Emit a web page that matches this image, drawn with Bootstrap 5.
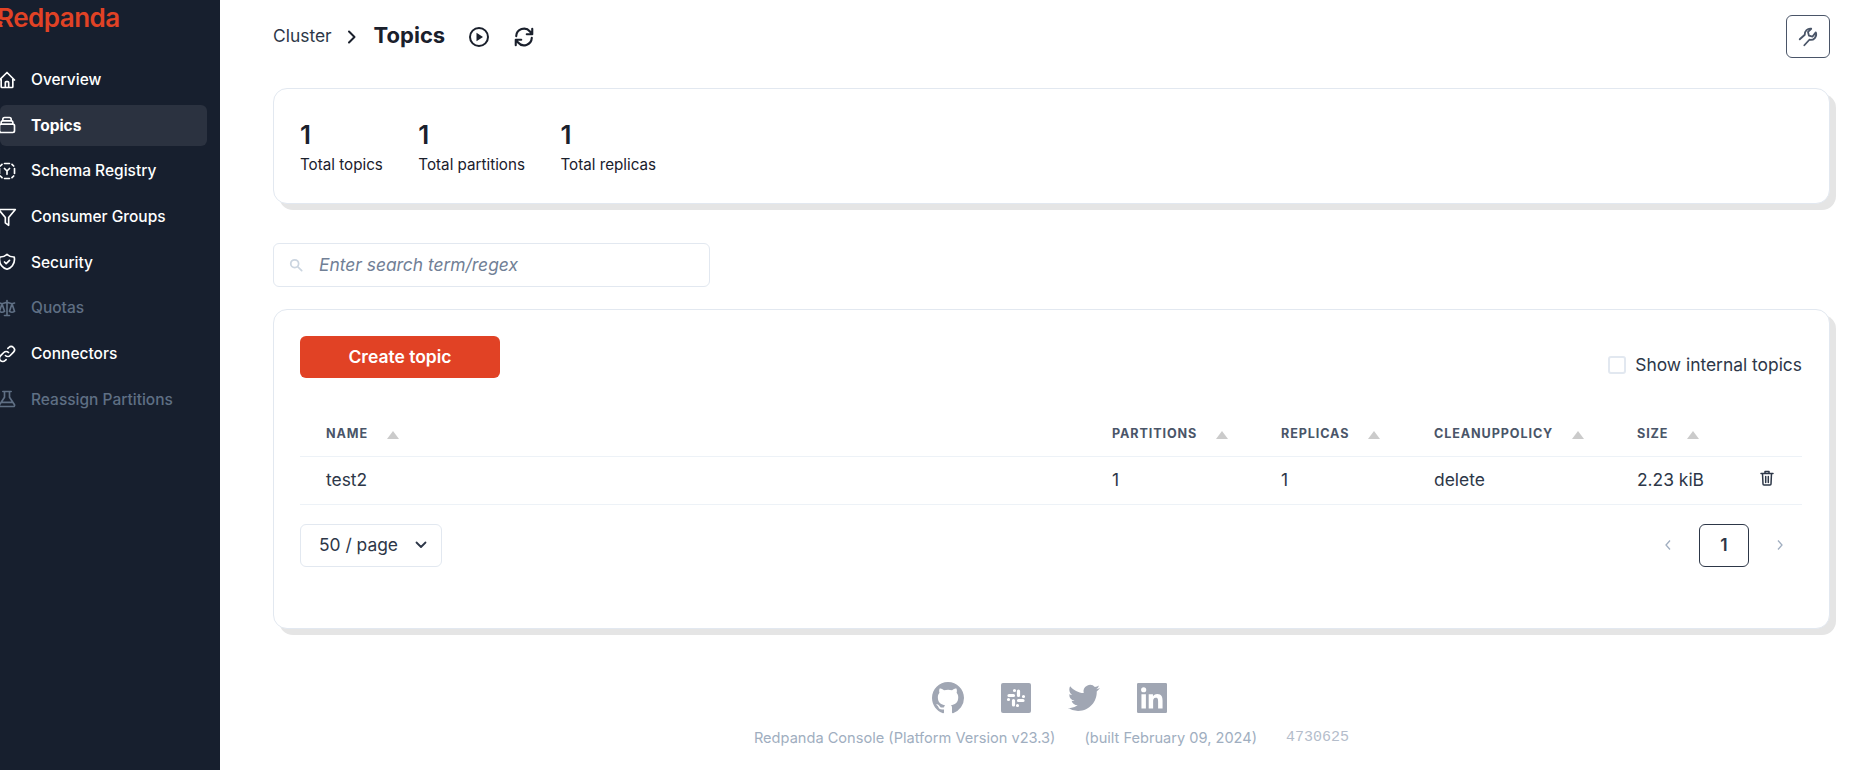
<!DOCTYPE html>
<html lang="en">
<head>
<meta charset="utf-8">
<title>Topics</title>
<link href="https://cdn.jsdelivr.net/npm/bootstrap@5.3.0/dist/css/bootstrap.min.css" rel="stylesheet">
<style>
html,body{height:100%}
body{font-family:Inter,"Noto Sans",sans-serif;color:#1a202c;background:#fff;overflow:hidden}
.rp-shell{height:770px}
.rp-side{width:220px;flex:none;background:#171f2e;overflow:hidden}
.rp-logo{position:relative;height:59px;margin-left:-3px;padding-top:1px;font-size:26px;line-height:34px;font-weight:600;color:#e14225;letter-spacing:-.5px}
.rp-logo svg{position:absolute;left:3px;top:19px}
.rp-item{display:flex;align-items:center;height:41px;margin:0 13px 4.7px 0;border-radius:6px;color:#fff;font-size:15.5px;font-weight:500;text-decoration:none}
.rp-item svg{width:20px;height:20px;margin:0 14px 0 -3px;flex:none;fill:none;stroke:currentColor;stroke-width:2;stroke-linecap:round;stroke-linejoin:round}
.rp-item.rp-on{background:#2b3240;font-weight:700}
.rp-item.rp-off{color:#5f6f84}
.rp-main{padding:15px 36px 0 53px;min-width:0}
.rp-head{height:43px}
.rp-crumb{font-size:17.400px;color:#2d3748;margin-bottom:1px}
.rp-chev{margin:0 17px 0 15px}
.rp-title{font-size:22px;font-weight:700;color:#1a202c;margin-bottom:2px}
.rp-play{margin-left:23px}
.rp-sync{margin-left:23px}
.rp-toolbtn{width:44px;height:43px;border:1px solid #4a5568;border-radius:6px;background:#fff;color:#4a5568}
.rp-panel{background:#fff;border:1px solid #e2e8f0;border-radius:14px;box-shadow:6px 6px 0 0 #e5e5e5;padding:26px 27px 26px 26px}
.rp-stats{margin-top:30px;height:116px;gap:35.500px;padding-top:27px}
.rp-num{font-size:26px;font-weight:600;line-height:38px;color:#1a202c}
.rp-lab{font-size:15.200px;line-height:22px;color:#1a202c}
.rp-search{margin-top:39px;width:437px;height:44px;border:1px solid #e2e8f0;border-radius:6px;padding-left:15px;gap:16px;color:#718096;font-size:17.400px;font-style:italic}
.rp-tablecard{margin-top:22px;height:320px}
.rp-create{width:200px;height:42px;background:#e14225;border:0;border-radius:6px;color:#fff;font-size:17.500px;font-weight:600}
.rp-check{font-size:17.400px;color:#2d3748;gap:9px;margin-top:16px}
.rp-box{width:18px;height:18px;border:2px solid #e2e8f0;border-radius:3px}
.rp-grid{table-layout:fixed;width:100%;margin-top:32px;margin-bottom:0}
.rp-grid th{height:46px;padding:3px 0 0 26px;font-size:12.600px;font-weight:700;letter-spacing:.9px;color:#4a5568;border-bottom:1px solid #edf2f7;vertical-align:middle;white-space:nowrap}
.rp-grid td{height:48px;padding:0 0 0 26px;font-size:17.400px;color:#2d3748;border-bottom:1px solid #edf2f7;vertical-align:middle}
.rp-tri{display:inline-block;width:0;height:0;margin-left:19px;border-left:6px solid transparent;border-right:6px solid transparent;border-bottom:8px solid #cbcbcb;vertical-align:-1px}
.rp-foot-row{margin-top:19px}
.rp-size{width:142px;height:43px;border:1px solid #e2e8f0;border-radius:6px;padding:0 14px 0 18px;font-size:17.400px;color:#2d3748}
.rp-page{width:50px;height:43px;border:1px solid #2d3748;border-radius:6px;font-size:17.400px;font-weight:600;color:#2d3748}
.rp-pager{margin-right:18px;gap:27px;color:#a0aec0}
.rp-foot{margin-top:53px;color:#a0aec0}
.rp-icons{gap:37px;height:32px;margin-left:-4px}
.rp-icons svg{fill:#a0a6b3;display:block}
.rp-note{margin-top:13px;font-size:14.600px;line-height:22px;color:#a0aec0;gap:29px}
.rp-hash{font-family:"Liberation Mono",monospace;font-size:15px;font-weight:300;color:#b4bdcb}
</style>
</head>
<body>
<div class="d-flex rp-shell">
  <aside class="rp-side">
    <div class="rp-logo">Redpanda<svg width="14" height="10" viewBox="0 0 14 10"><path d="M0 1l6 2M2 5l5 2" stroke="#171f2e" stroke-width="1.5" fill="none"/></svg></div>
    <nav>
      <a class="rp-item" href="#"><svg viewBox="0 0 24 24"><path d="M3 12l9-9 9 9M5 10v10a1 1 0 001 1h12a1 1 0 001-1V10M10 21v-6a1 1 0 011-1h2a1 1 0 011 1v6"/></svg>Overview</a>
      <a class="rp-item rp-on" href="#"><svg viewBox="0 0 24 24"><path d="M19 11H5m14 0a2 2 0 012 2v6a2 2 0 01-2 2H5a2 2 0 01-2-2v-6a2 2 0 012-2m14 0V9a2 2 0 00-2-2M5 11V9a2 2 0 012-2m0 0V5a2 2 0 012-2h6a2 2 0 012 2v2M7 7h10"/></svg>Topics</a>
      <a class="rp-item" href="#"><svg viewBox="0 0 24 24"><path d="M9 3h6M3 9v6M21 9v6M9 21h6M4 6l2-2M18 4l2 2M4 18l2 2M18 20l2-2M9 9l3 3 3-3M12 12v4"/></svg>Schema Registry</a>
      <a class="rp-item" href="#"><svg viewBox="0 0 24 24"><path d="M2 3h20l-8 9.500V22l-4-3v-6.500z"/></svg>Consumer Groups</a>
      <a class="rp-item" href="#"><svg viewBox="0 0 24 24"><path d="M9 12l2 2 4-4m5.618-4.016A11.955 11.955 0 0112 2.944a11.955 11.955 0 01-8.618 3.04A12.020 12.020 0 003 9c0 5.591 3.824 10.290 9 11.622 5.176-1.332 9-6.030 9-11.622 0-1.042-.133-2.052-.382-3.016z"/></svg>Security</a>
      <a class="rp-item rp-off" href="#"><svg viewBox="0 0 24 24"><path d="M3 6l3 1m0 0l-3 9a5.002 5.002 0 006.001 0M6 7l3 9M6 7l6-2m6 2l3-1m-3 1l-3 9a5.002 5.002 0 006.001 0M18 7l3 9m-3-9l-6-2m0-2v2m0 16V5m0 16H9m3 0h3"/></svg>Quotas</a>
      <a class="rp-item" href="#"><svg viewBox="0 0 24 24"><path d="M13.828 10.172a4 4 0 00-5.656 0l-4 4a4 4 0 105.656 5.656l1.102-1.101m-.758-4.899a4 4 0 005.656 0l4-4a4 4 0 00-5.656-5.656l-1.100 1.100"/></svg>Connectors</a>
      <a class="rp-item rp-off" href="#"><svg viewBox="0 0 24 24"><path d="M7 3h10M9 3v7l-6 9a1.500 1.500 0 001.300 2h15.400a1.500 1.500 0 001.300-2l-6-9V3M5 16h14"/></svg>Reassign Partitions</a>
    </nav>
  </aside>
  <main class="rp-main flex-grow-1">
    <div class="rp-head d-flex align-items-center">
      <span class="rp-crumb">Cluster</span>
      <svg class="rp-chev" width="10" height="14" viewBox="0 0 10 14" fill="none" stroke="#1a202c" stroke-width="2" stroke-linecap="round" stroke-linejoin="round"><path d="M2 1.500L7.500 7 2 12.500"/></svg>
      <span class="rp-title">Topics</span>
      <svg class="rp-play" width="22" height="22" viewBox="0 0 22 22"><circle cx="11" cy="11" r="9" fill="none" stroke="#1a202c" stroke-width="2"/><path d="M8.500 6.800l6.500 4.200-6.500 4.200z" fill="#1a202c"/></svg>
      <svg class="rp-sync" width="22" height="22" viewBox="0 0 24 24" fill="none" stroke="#1a202c" stroke-width="2.300" stroke-linecap="round" stroke-linejoin="round"><path d="M3.500 11A8.500 8.500 0 0118.500 6L21 9M21 3v6h-6M20.500 13A8.500 8.500 0 015.500 18L3 15M3 21v-6h6"/></svg>
      <button class="rp-toolbtn ms-auto d-flex align-items-center justify-content-center p-0" type="button" aria-label="Settings"><svg width="22" height="22" viewBox="0 0 24 24" fill="none" stroke="currentColor" stroke-width="2" stroke-linecap="round" stroke-linejoin="round"><path d="M3 14.500l5.500-5a6 6 0 017-6.500l-3.500 3.500 1 4 4 1L20.500 7a6 6 0 01-7 8l-5.500 6"/></svg></button>
    </div>

    <section class="rp-panel rp-stats d-flex">
      <div><div class="rp-num">1</div><div class="rp-lab">Total topics</div></div>
      <div><div class="rp-num">1</div><div class="rp-lab">Total partitions</div></div>
      <div><div class="rp-num">1</div><div class="rp-lab">Total replicas</div></div>
    </section>

    <div class="rp-search d-flex align-items-center">
      <svg width="14" height="14" viewBox="0 0 16 16" fill="none" stroke="#cbd5e0" stroke-width="2" stroke-linecap="round"><circle cx="6.500" cy="6.500" r="4.500"/><path d="M10 10l4.500 4.500"/></svg>
      <span>Enter search term/regex</span>
    </div>

    <section class="rp-panel rp-tablecard">
      <div class="d-flex justify-content-between align-items-start">
        <button class="rp-create" type="button">Create topic</button>
        <div class="rp-check d-flex align-items-center"><span class="rp-box"></span><span>Show internal topics</span></div>
      </div>
      <table class="rp-grid">
        <colgroup><col style="width:786px"><col style="width:169px"><col style="width:153px"><col style="width:203px"><col style="width:123px"><col></colgroup>
        <thead><tr>
          <th>NAME<span class="rp-tri"></span></th>
          <th>PARTITIONS<span class="rp-tri"></span></th>
          <th>REPLICAS<span class="rp-tri"></span></th>
          <th>CLEANUPPOLICY<span class="rp-tri"></span></th>
          <th>SIZE<span class="rp-tri"></span></th>
          <th></th>
        </tr></thead>
        <tbody><tr>
          <td>test2</td><td>1</td><td>1</td><td>delete</td><td>2.23 kiB</td>
          <td><svg class="d-block mb-1" width="14" height="16" viewBox="0 0 14 16" fill="none" stroke="#2d3748" stroke-width="1.500" stroke-linecap="round" stroke-linejoin="round"><path d="M1 3.500h12M5 3.500V1.500h4v2M2.500 3.500l.5 10.500a1 1 0 001 1h6a1 1 0 001-1l.5-10.500M5.700 6.500v6M8.300 6.500v6"/></svg></td>
        </tr></tbody>
      </table>
      <div class="rp-foot-row d-flex justify-content-between align-items-center">
        <div class="rp-size d-flex justify-content-between align-items-center"><span>50 / page</span><svg width="12" height="8" viewBox="0 0 12 8" fill="none" stroke="#2d3748" stroke-width="1.800" stroke-linecap="round" stroke-linejoin="round"><path d="M1.500 1.500L6 6l4.500-4.500"/></svg></div>
        <div class="d-flex align-items-center rp-pager">
          <svg width="8" height="12" viewBox="0 0 8 12" fill="none" stroke="currentColor" stroke-width="1.300"><path d="M6 1.500L2 6l4 4.500"/></svg>
          <span class="rp-page d-flex align-items-center justify-content-center">1</span>
          <svg width="8" height="12" viewBox="0 0 8 12" fill="none" stroke="currentColor" stroke-width="1.300"><path d="M2 1.500L6 6l-4 4.500"/></svg>
        </div>
      </div>
    </section>

    <footer class="rp-foot d-flex flex-column align-items-center">
      <div class="rp-icons d-flex align-items-center">
        <svg width="32" height="32" viewBox="0 0 16 16"><path d="M8 0C3.580 0 0 3.580 0 8c0 3.540 2.290 6.530 5.470 7.590.4.070.55-.170.55-.380 0-.190-.010-.820-.010-1.490-2.010.370-2.530-.490-2.690-.940-.090-.230-.480-.940-.820-1.130-.280-.150-.680-.520-.010-.530.630-.010 1.080.580 1.230.820.720 1.210 1.870.870 2.330.660.070-.520.280-.870.510-1.070-1.780-.2-3.640-.890-3.640-3.950 0-.870.310-1.590.820-2.150-.080-.2-.360-1.020.080-2.120 0 0 .670-.210 2.200.820.640-.180 1.320-.270 2-.270.680 0 1.360.090 2 .270 1.530-1.040 2.200-.820 2.200-.820.440 1.100.160 1.920.080 2.120.510.560.820 1.270.820 2.150 0 3.070-1.870 3.750-3.650 3.950.290.250.540.730.540 1.480 0 1.070-.010 1.930-.010 2.200 0 .210.150.460.550.380A8.013 8.013 0 0016 8c0-4.420-3.580-8-8-8z"/></svg>
        <svg width="30" height="30" viewBox="0 0 30 30"><rect width="30" height="30" rx="2"/><g stroke="#fff" stroke-width="3.200" stroke-linecap="round"><path d="M8 12.500h4.500M13.500 7.500v0M17.500 8v4.500M22.500 13.500h0M17.500 17.500H22M16.500 22.500h0M12.500 17.500V22M7.500 16.500h0"/></g></svg>
        <svg width="32" height="32" viewBox="0 0 24 24"><path d="M23.953 4.570a10 10 0 01-2.825.775 4.958 4.958 0 002.163-2.723c-.951.555-2.005.959-3.127 1.184a4.920 4.920 0 00-8.384 4.482C7.690 8.095 4.067 6.130 1.640 3.162a4.822 4.822 0 00-.666 2.475c0 1.710.870 3.213 2.188 4.096a4.904 4.904 0 01-2.228-.616v.060a4.923 4.923 0 003.946 4.827 4.996 4.996 0 01-2.212.085 4.936 4.936 0 004.604 3.417 9.867 9.867 0 01-6.102 2.105c-.390 0-.779-.023-1.170-.067a13.995 13.995 0 007.557 2.209c9.053 0 13.998-7.496 13.998-13.985 0-.210 0-.420-.015-.630A9.935 9.935 0 0024 4.590z"/></svg>
        <svg width="30" height="30" viewBox="0 0 24 24"><path fill-rule="evenodd" d="M20.447 20.452h-3.554v-5.569c0-1.328-.027-3.037-1.852-3.037-1.853 0-2.136 1.445-2.136 2.939v5.667H9.351V9h3.414v1.561h.046c.477-.9 1.637-1.850 3.370-1.850 3.601 0 4.267 2.370 4.267 5.455v6.286zM5.337 7.433a2.062 2.062 0 01-2.063-2.065 2.064 2.064 0 112.063 2.065zm1.782 13.019H3.555V9h3.564v11.452zM1 0h22a1 1 0 011 1v22a1 1 0 01-1 1H1a1 1 0 01-1-1V1a1 1 0 011-1z"/></svg>
      </div>
      <div class="rp-note d-flex">
        <span>Redpanda Console (Platform Version v23.3)</span>
        <span>(built February 09, 2024)</span>
        <span class="rp-hash">4730625</span>
      </div>
    </footer>
  </main>
</div>
<script src="https://cdn.jsdelivr.net/npm/bootstrap@5.3.0/dist/js/bootstrap.bundle.min.js"></script>
</body>
</html>
